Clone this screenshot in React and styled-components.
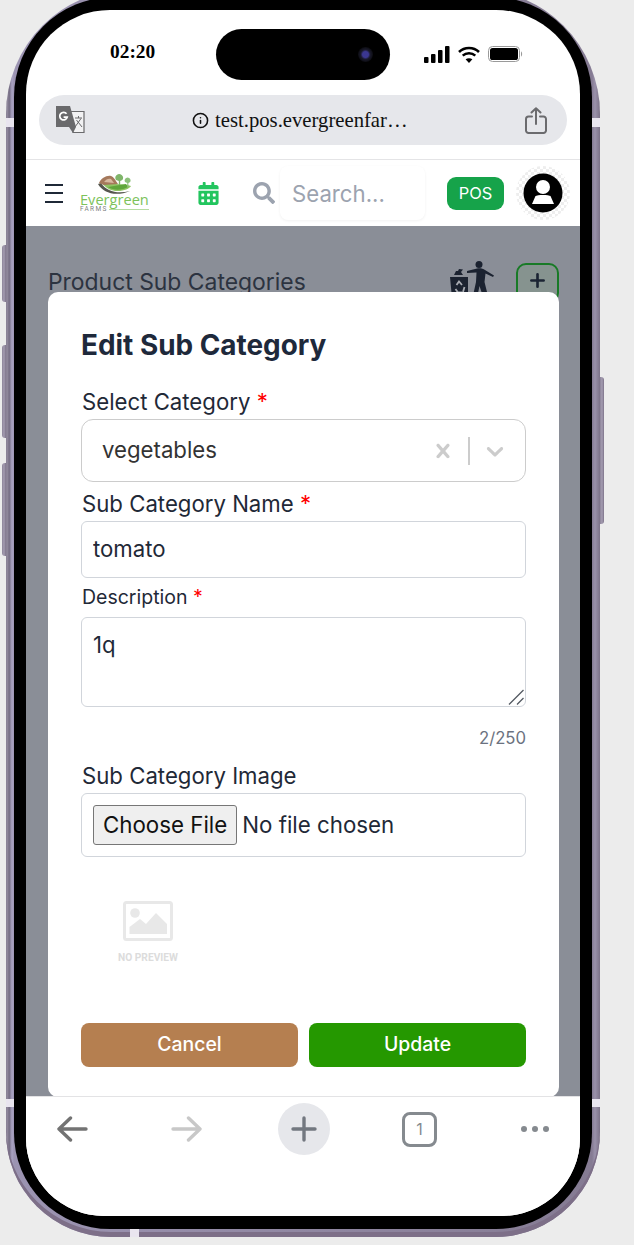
import React from "react";
import styled, { createGlobalStyle } from "styled-components";
import { Plus, Info } from "lucide-react";
import { FaCalendarAlt, FaSearch } from "react-icons/fa";

const GlobalStyle = createGlobalStyle`
  html, body {
    margin: 0;
    padding: 0;
    background: #ececec;
    height: 1245px;
    overflow: hidden;
  }
  * { box-sizing: border-box; }
  body { font-family: Inter, "Liberation Sans", sans-serif; }
`;

const Stage = styled.div`
  position: relative;
  width: 634px;
  height: 1245px;
  padding: 0 0 0 6px;
  overflow: hidden;
`;

const Frame = styled.div`
  position: relative;
  width: 594px;
  height: 1248px;
  margin-top: -11px;
  padding: 8px;
  border-radius: 125px 125px 105px 105px;
  background: linear-gradient(
    90deg,
    #8a8296 0,
    #8f879b 2px,
    #6f677d 3px,
    #a9a2c2 6px,
    #9c94b2 8px,
    #857b93 calc(100% - 8px),
    #9a91aa calc(100% - 5px),
    #7d7389 100%
  );
  box-shadow: inset 0 -5px 0 #7d6f88;
`;

const Bezel = styled.div`
  width: 578px;
  height: 1232px;
  padding: 13px 12px;
  border-radius: 100px 100px 96px 96px;
  background: #000;
`;

const Screen = styled.div`
  position: relative;
  display: flex;
  flex-direction: column;
  width: 554px;
  height: 1206px;
  border-radius: 84px 84px 78px 78px;
  background: #fff;
  overflow: hidden;
`;

const SideButton = styled.span`
  position: absolute;
  top: ${({ $top }) => $top}px;
  ${({ $right }) => ($right ? "right: -4px;" : "left: -4px;")}
  width: 4px;
  height: ${({ $height }) => $height}px;
  border-radius: ${({ $right }) => ($right ? "0 3px 3px 0" : "3px 0 0 3px")};
  background: linear-gradient(90deg, #8d8499, #a49cb1, #7d7389);
`;

const Band = styled.span`
  position: absolute;
  background: #e9e5ef;
  ${({ $place }) => $place}
`;

const StatusBar = styled.div`
  position: relative;
  display: flex;
  align-items: center;
  height: 85px;
  flex: none;
  padding-left: 84px;
`;

const Clock = styled.span`
  width: 45px;
  font-family: "Liberation Serif", serif;
  font-weight: 700;
  font-size: 19.4px;
  color: #000;
  line-height: 1;
  margin-top: -2px;
  white-space: nowrap;
`;

const Island = styled.div`
  display: flex;
  align-items: center;
  justify-content: flex-end;
  width: 174px;
  height: 51px;
  margin-left: 61px;
  margin-top: 3px;
  padding-right: 17px;
  border-radius: 26px;
  background: #000;
`;

const Lens = styled.span`
  width: 15px;
  height: 15px;
  border-radius: 50%;
  background: radial-gradient(circle, #3b3790 0 28%, #1a1a2c 45%, #0c0c12 70%);
`;

const StatusIcons = styled.div`
  display: flex;
  align-items: center;
  gap: 8px;
  margin-left: 34px;
  margin-top: 3px;
`;

const UrlBar = styled.div`
  display: flex;
  align-items: center;
  flex: none;
  height: 50px;
  margin: 0 13px;
  padding: 0 20px 0 17px;
  border-radius: 25px;
  background: #e6e7eb;
`;

const UrlCenter = styled.div`
  display: flex;
  align-items: center;
  gap: 6px;
  margin-left: 107px;
  flex: 1;
  font-family: "Liberation Serif", serif;
  font-size: 20.7px;
  color: #111;
  white-space: nowrap;
`;

const NavBar = styled.div`
  display: flex;
  align-items: center;
  flex: none;
  height: 67px;
  margin-top: 14px;
  padding-left: 19px;
  border-top: 1px solid #e4e4e6;
`;

const Burger = styled.div`
  display: flex;
  flex-direction: column;
  gap: 6.5px;
  width: 18px;
  span {
    height: 2px;
    background: #1f2937;
  }
`;

const Logo = styled.div`
  display: flex;
  flex-direction: column;
  width: 69px;
  margin-left: 17px;
`;

const LogoName = styled.span`
  font-family: "Open Sans", sans-serif;
  font-size: 14.6px;
  font-weight: 500;
  line-height: 11px;
  color: #7cc25a;
  margin-top: -3px;
`;

const LogoFoot = styled.div`
  display: flex;
  align-items: center;
  gap: 1px;
  font-family: Roboto, sans-serif;
  font-size: 6.5px;
  line-height: 8px;
  letter-spacing: 1.4px;
  color: #808080;
  &::after {
    content: "";
    flex: 1;
    height: 1px;
    background: #b6dca2;
  }
`;

const NavIconSlot = styled.span`
  display: flex;
  margin-left: ${({ $gap }) => $gap}px;
`;

const SearchBox = styled.div`
  display: flex;
  align-items: center;
  width: 145px;
  height: 54px;
  margin-left: 5px;
  padding-left: 12px;
  border-radius: 8px;
  background: #fff;
  box-shadow: 0 1px 3px rgba(0, 0, 0, 0.06);
  font-size: 22.2px;
  color: #9ca3af;
`;

const PosButton = styled.span`
  display: flex;
  align-items: center;
  justify-content: center;
  width: 57px;
  height: 33px;
  margin-left: 22px;
  border-radius: 9px;
  background: #16a34a;
  color: #fff;
  font-size: 16.4px;
`;

const AvatarWrap = styled.span`
  display: flex;
  align-items: center;
  justify-content: center;
  width: 54px;
  height: 54px;
  margin-left: 12px;
  border-radius: 50%;
  background: repeating-conic-gradient(#eeeeee 0 25%, #ffffff 0 50%) 0 0 / 6px 6px;
`;

const Page = styled.div`
  position: relative;
  flex: 1;
  padding: 37px 21px 0 22px;
  background: #8a8e97;
  overflow: hidden;
`;

const PageHead = styled.div`
  display: flex;
  align-items: flex-start;
  justify-content: space-between;
`;

const PageTitle = styled.h1`
  margin: 5px 0 0;
  font-size: 22.9px;
  line-height: 28px;
  font-weight: 400;
  color: #2c3340;
`;

const PageActions = styled.div`
  display: flex;
  align-items: flex-start;
  gap: 20px;
`;

const LitterSvg = styled.svg`
  margin-top: -3px;
`;

const AddButton = styled.span`
  display: flex;
  align-items: center;
  justify-content: center;
  width: 43px;
  height: 40px;
  padding-bottom: 6px;
  border: 2px solid #187a26;
  border-radius: 10px;
  background: #86938f;
  color: #1b2433;
`;

const Modal = styled.div`
  position: absolute;
  top: 66px;
  left: 22px;
  width: 511px;
  height: 805px;
  padding: 33px 33px 0;
  border-radius: 10px;
  background: #fff;
`;

const ModalTitle = styled.h2`
  margin: 0 0 23px;
  font-size: 27.9px;
  line-height: 40px;
  font-weight: 700;
  color: #1e293b;
`;

const FieldLabel = styled.label`
  display: block;
  margin-top: ${({ $top }) => $top ?? 0}px;
  margin-bottom: ${({ $bottom }) => $bottom ?? 3}px;
  padding-left: 1px;
  font-size: ${({ $small }) => ($small ? 19.5 : 22.2)}px;
  line-height: ${({ $small }) => ($small ? 22 : 28)}px;
  font-weight: ${({ $small }) => ($small ? 420 : 400)};
  color: #1f2937;
  b {
    font-weight: 400;
    color: #ff0000;
  }
`;

const SelectBox = styled.div`
  display: flex;
  align-items: center;
  height: 63px;
  padding: 0 16px 0 20px;
  border: 1px solid #cccccc;
  border-radius: 12px;
  font-size: 22.2px;
  color: #333333;
`;

const SelectValue = styled.span`
  flex: 1;
  margin-top: -2px;
`;

const SelectDivider = styled.span`
  width: 2px;
  height: 28px;
  margin: 0 11px 0 11px;
  background: #cccccc;
`;

const TextInput = styled.input`
  display: block;
  width: 100%;
  height: 57px;
  padding: 0 11px 2px;
  border: 1px solid #d1d5db;
  border-radius: 6px;
  background: #fff;
  font: 400 22.2px Inter, sans-serif;
  color: #1f2937;
  outline: none;
`;

const AreaWrap = styled.div`
  position: relative;
  height: 90px;
`;

const TextArea = styled.textarea`
  display: block;
  width: 100%;
  height: 90px;
  padding: 13px 11px;
  border: 1px solid #d1d5db;
  border-radius: 6px;
  font: 400 22.2px/27px Inter, sans-serif;
  color: #1f2937;
  outline: none;
  resize: none;
`;

const ResizeGrip = styled.svg`
  position: absolute;
  right: 1px;
  bottom: 1px;
`;

const Counter = styled.div`
  margin-top: 21px;
  font-size: 16.7px;
  line-height: 20px;
  text-align: right;
  color: #6b7280;
`;

const FileBox = styled.div`
  display: flex;
  align-items: center;
  height: 64px;
  padding: 0 11px;
  border: 1px solid #d1d5db;
  border-radius: 6px;
`;

const FileInput = styled.input`
  width: 100%;
  font: 400 22.3px Inter, sans-serif;
  color: #1f2937;
  &::file-selector-button {
    height: 40px;
    margin-right: 5px;
    padding: 0 9px 2px;
    border: 1px solid #767676;
    border-radius: 3px;
    background: #efefef;
    color: #111;
    font: inherit;
  }
`;

const Preview = styled.div`
  display: flex;
  flex-direction: column;
  align-items: center;
  width: 134px;
  margin-top: 44px;
`;

const PreviewText = styled.span`
  margin-top: 9px;
  font-family: Roboto, sans-serif;
  font-size: 10.2px;
  line-height: 16px;
  font-weight: 700;
  color: #dcdcdc;
`;

const Actions = styled.div`
  display: grid;
  grid-template-columns: 1fr 1fr;
  gap: 11px;
  margin-top: 57px;
`;

const ActionButton = styled.button`
  height: 44px;
  padding: 0 0 2px;
  border: none;
  border-radius: 8px;
  background: ${({ $tone }) => $tone};
  color: #fff;
  font: 450 19.4px Inter, sans-serif;
`;

const BottomBar = styled.div`
  position: relative;
  display: flex;
  align-items: flex-start;
  flex: none;
  height: 120px;
  padding: 6px 0 0 31px;
  border-top: 1px solid #e3e3e5;
  background: #fff;
`;

const BarSlot = styled.span`
  display: flex;
  align-items: center;
  justify-content: center;
  height: 52px;
  margin-left: ${({ $gap }) => $gap ?? 0}px;
`;

const PlusCircle = styled(BarSlot)`
  width: 52px;
  border-radius: 50%;
  background: #e6e7eb;
`;

const TabCount = styled.span`
  display: flex;
  align-items: center;
  justify-content: center;
  width: 35px;
  height: 35px;
  border: 3px solid #858a8f;
  border-radius: 8px;
  font-size: 16px;
  color: #858a8f;
`;

const Dots = styled.span`
  display: flex;
  gap: 5px;
  span {
    width: 6px;
    height: 6px;
    border-radius: 50%;
    background: #858a8f;
  }
`;

function SignalIcon() {
  return (
    <svg width="26" height="17" viewBox="0 0 26 17">
      <rect x="0" y="11" width="4.5" height="6" rx="1" />
      <rect x="7" y="8" width="4.5" height="9" rx="1" />
      <rect x="14" y="4" width="4.5" height="13" rx="1" />
      <rect x="21" y="0" width="4.5" height="17" rx="1" />
    </svg>
  );
}

function WifiIcon() {
  return (
    <svg width="22" height="17" viewBox="0 0 22 17" fill="none" stroke="#000" strokeWidth="2.6">
      <path d="M1 6 C6.5 0.7 15.5 0.7 21 6" />
      <path d="M4.7 9.6 C8.2 6.4 13.8 6.4 17.3 9.6" />
      <path d="M11 17 L7.6 13.3 C9.5 11.8 12.5 11.8 14.4 13.3 Z" fill="#000" stroke="none" />
    </svg>
  );
}

function BatteryIcon() {
  return (
    <svg width="35" height="16" viewBox="0 0 35 16">
      <rect x="0.5" y="0.5" width="31" height="15" rx="4" fill="none" stroke="#9a9a9a" />
      <rect x="2" y="2" width="28" height="12" rx="2.6" fill="#000" />
      <path d="M33 5.5 C34.5 6 34.5 10 33 10.5 Z" fill="#9a9a9a" />
    </svg>
  );
}

function TranslateIcon() {
  return (
    <svg width="29" height="28" viewBox="0 0 29 28">
      <path d="M14 5.5 H28 V26.5 H17 Z" fill="#f2f2f3" stroke="#6a6a6c" strokeWidth="1.2" />
      <path d="M0 0 H14 L20 21 H0 Z" fill="#6a6a6c" />
      <path d="M13 21 L17 27 L20 21 Z" fill="#6a6a6c" />
      <path d="M10.6 7.8 A3.8 3.8 0 1 0 11.2 11.2 H7.6" fill="none" stroke="#fff" strokeWidth="1.7" />
      <path d="M19 12 H26 M22.5 10 V12 M25 12.5 L19 21 M20.5 14 L26 21" fill="none" stroke="#6a6a6c" strokeWidth="1" />
    </svg>
  );
}

function ShareIcon() {
  return (
    <svg width="22" height="27" viewBox="0 0 22 27" fill="none" stroke="#6b6b6e" strokeWidth="2" strokeLinecap="round" strokeLinejoin="round">
      <path d="M7 9.5 H3.5 a2.5 2.5 0 0 0 -2.5 2.5 V23.5 a2.5 2.5 0 0 0 2.5 2.5 H18.5 a2.5 2.5 0 0 0 2.5 -2.5 V12 a2.5 2.5 0 0 0 -2.5 -2.5 H15" />
      <path d="M11 1.5 V17 M6.5 5.5 L11 1.2 L15.5 5.5" />
    </svg>
  );
}

function LogoArt() {
  return (
    <svg width="69" height="24" viewBox="0 0 69 24">
      <path d="M18 11 C23 20 36 24 50 18 C38 21 27 19 21 10 Z" fill="#55564e" />
      <path d="M20 9 C30 12 42 10 51 13 C49 17 36 21 27 15 Z" fill="#8fc463" />
      <path d="M28 14 L46 11 L48 14 C43 17 34 18 28 14 Z" fill="#5fa63b" />
      <path d="M19 10 C21 5 27 2 31 3 C34 4 36 8 38 11 L24 12 Z" fill="#a5795c" />
      <path d="M24 9 C26 6 29 5 31 6 L34 10 Z" fill="#d8b9a0" />
      <path d="M36 7 a3.8 3.8 0 1 1 6.4 0 l-2.2 1 v4 h-1.4 v-4 Z" fill="#7fb56a" />
      <path d="M45 9 a3 3 0 1 1 5.2 0 l-1.8 1 v4 h-1.2 v-4 Z" fill="#8cc07a" />
    </svg>
  );
}

function AvatarIcon() {
  return (
    <svg width="40" height="40" viewBox="0 0 40 40">
      <circle cx="20" cy="20" r="19.5" fill="#000" />
      <circle cx="20" cy="14" r="7" fill="#fff" />
      <path d="M9 31 L12.5 23 C14 21.5 26 21.5 27.5 23 L31 31 Z" fill="#fff" />
    </svg>
  );
}

function LitterIcon() {
  return (
    <LitterSvg width="48" height="38" viewBox="0 0 48 38" fill="#1b2230">
      <circle cx="31" cy="4.5" r="3.5" />
      <path d="M19 11 L29 8.5 C32 8 35 8.5 37 10 L46 15.5 L45 17 L37.5 13.5 L36.5 22 L40.5 38 H35.5 L31.5 26 L29 38 H24.5 L28 22 L28.5 12.5 L19 13 Z" />
      <path d="M2 17 H20 V38 H4 Z" />
      <path d="M6 15 L8 11 L10 11 L11 9 L15 9.5 L13 12 L15 15 Z" />
      <path d="M8.5 25 L11 21.5 L14 25 M7.5 29 L10 32.5 H14 M16.5 27 L15 32" fill="none" stroke="#a8abb2" strokeWidth="1.8" />
    </LitterSvg>
  );
}

function NoPreviewIcon() {
  return (
    <svg width="50" height="40" viewBox="0 0 50 40">
      <rect x="1.5" y="1.5" width="47" height="37" rx="2" fill="none" stroke="#e8e8e8" strokeWidth="3" />
      <circle cx="12" cy="12" r="4.8" fill="#e8e8e8" />
      <path d="M6.5 33 V26 L17 18 L23 23 L33 12 L44 23 V33 Z" fill="#e8e8e8" />
    </svg>
  );
}

function ClearIndicator() {
  return (
    <svg width="28" height="28" viewBox="0 0 20 20" fill="#cccccc">
      <path d="M14.348 14.849c-0.469 0.469-1.229 0.469-1.697 0l-2.651-3.030-2.651 3.029c-0.469 0.469-1.229 0.469-1.697 0-0.469-0.469-0.469-1.229 0-1.697l2.758-3.15-2.759-3.152c-0.469-0.469-0.469-1.228 0-1.697s1.228-0.469 1.697 0l2.652 3.031 2.651-3.031c0.469-0.469 1.228-0.469 1.697 0s0.469 1.229 0 1.697l-2.758 3.152 2.758 3.15c0.469 0.469 0.469 1.229 0 1.698z" />
    </svg>
  );
}

function ChevronIndicator() {
  return (
    <svg width="28" height="28" viewBox="0 0 20 20" fill="#cccccc">
      <path d="M4.516 7.548c0.436-0.446 1.043-0.481 1.576 0l3.908 3.747 3.908-3.747c0.533-0.481 1.141-0.446 1.574 0 0.436 0.445 0.408 1.197 0 1.615-0.406 0.418-4.695 4.502-4.695 4.502-0.217 0.223-0.502 0.335-0.787 0.335s-0.57-0.112-0.789-0.335c0 0-4.287-4.084-4.695-4.502s-0.436-1.17 0-1.615z" />
    </svg>
  );
}

export default function App() {
  return (
    <Stage>
      <GlobalStyle />
      <Frame>
        <SideButton $top={256} $height={57} />
        <SideButton $top={356} $height={93} />
        <SideButton $top={474} $height={93} />
        <SideButton $right $top={388} $height={147} />
        <Band $place="left: 0; top: 129px; width: 8px; height: 9px;" />
        <Band $place="right: 0; top: 129px; width: 8px; height: 9px;" />
        <Band $place="left: 0; top: 1110px; width: 8px; height: 8px;" />
        <Band $place="right: 0; top: 1110px; width: 8px; height: 8px;" />
        <Band $place="left: 124px; bottom: 0; width: 9px; height: 8px;" />
        <Bezel>
          <Screen>
            <StatusBar>
              <Clock>02:20</Clock>
              <Island>
                <Lens />
              </Island>
              <StatusIcons>
                <SignalIcon />
                <WifiIcon />
                <BatteryIcon />
              </StatusIcons>
            </StatusBar>

            <UrlBar>
              <TranslateIcon />
              <UrlCenter>
                <Info size={17} color="#111" strokeWidth={2.2} />
                test.pos.evergreenfar…
              </UrlCenter>
              <ShareIcon />
            </UrlBar>

            <NavBar>
              <Burger>
                <span />
                <span />
                <span />
              </Burger>
              <Logo>
                <LogoArt />
                <LogoName>Evergreen</LogoName>
                <LogoFoot>FARMS</LogoFoot>
              </Logo>
              <NavIconSlot $gap={48}>
                <FaCalendarAlt size={23} color="#22c55e" />
              </NavIconSlot>
              <NavIconSlot $gap={33}>
                <FaSearch size={22} color="#9ca3af" />
              </NavIconSlot>
              <SearchBox>Search...</SearchBox>
              <PosButton>POS</PosButton>
              <AvatarWrap>
                <AvatarIcon />
              </AvatarWrap>
            </NavBar>

            <Page>
              <PageHead>
                <PageTitle>Product Sub Categories</PageTitle>
                <PageActions>
                  <LitterIcon />
                  <AddButton>
                    <Plus size={21} strokeWidth={3} />
                  </AddButton>
                </PageActions>
              </PageHead>

              <Modal>
                <ModalTitle>Edit Sub Category</ModalTitle>

                <FieldLabel>
                  Select Category <b>*</b>
                </FieldLabel>
                <SelectBox>
                  <SelectValue>vegetables</SelectValue>
                  <ClearIndicator />
                  <SelectDivider />
                  <ChevronIndicator />
                </SelectBox>

                <FieldLabel $top={8}>
                  Sub Category Name <b>*</b>
                </FieldLabel>
                <TextInput readOnly value="tomato" />

                <FieldLabel $small $top={8} $bottom={9}>
                  Description <b>*</b>
                </FieldLabel>
                <AreaWrap>
                  <TextArea readOnly value="1q" />
                  <ResizeGrip width="17" height="17" viewBox="0 0 17 17" fill="none" stroke="#555b63" strokeWidth="1.3">
                    <path d="M1 15.5 L15.5 1 M9 15.5 L15.5 9" />
                  </ResizeGrip>
                </AreaWrap>
                <Counter>2/250</Counter>

                <FieldLabel $top={14}>Sub Category Image</FieldLabel>
                <FileBox>
                  <FileInput type="file" />
                </FileBox>

                <Preview>
                  <NoPreviewIcon />
                  <PreviewText>NO PREVIEW</PreviewText>
                </Preview>

                <Actions>
                  <ActionButton $tone="#b57f50">Cancel</ActionButton>
                  <ActionButton $tone="#259800">Update</ActionButton>
                </Actions>
              </Modal>
            </Page>

            <BottomBar>
              <BarSlot>
                <svg width="31" height="26" viewBox="0 0 31 26" fill="none" stroke="#737373" strokeWidth="3.4" strokeLinecap="round" strokeLinejoin="round">
                  <path d="M2 13 H29 M13.5 2 L2 13 L13.5 24" />
                </svg>
              </BarSlot>
              <BarSlot $gap={83}>
                <svg width="31" height="26" viewBox="0 0 31 26" fill="none" stroke="#c8c8c8" strokeWidth="3.4" strokeLinecap="round" strokeLinejoin="round">
                  <path d="M2 13 H29 M17.5 2 L29 13 L17.5 24" />
                </svg>
              </BarSlot>
              <PlusCircle $gap={76}>
                <svg width="26" height="26" viewBox="0 0 26 26" fill="none" stroke="#737880" strokeWidth="3.4" strokeLinecap="round">
                  <path d="M2 13 H24 M13 2 V24" />
                </svg>
              </PlusCircle>
              <BarSlot $gap={72}>
                <TabCount>1</TabCount>
              </BarSlot>
              <BarSlot $gap={84}>
                <Dots>
                  <span />
                  <span />
                  <span />
                </Dots>
              </BarSlot>
            </BottomBar>
          </Screen>
        </Bezel>
      </Frame>
    </Stage>
  );
}
